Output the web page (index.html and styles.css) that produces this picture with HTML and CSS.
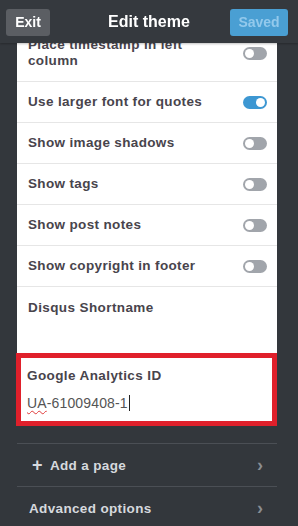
FILE: index.html
```html
<!DOCTYPE html>
<html lang="en">
<head>
  <meta charset="UTF-8" />
  <meta name="viewport" content="width=device-width, initial-scale=1" />
  <title>Edit theme</title>
  <link rel="stylesheet" href="styles.css">
</head>
<body>
  <!-- Ylapalkki pysyy paalla kun sisaltoa vieritetaan -->
  <div class="topbar">
    <button class="btn btn-exit">Exit</button>
    <span class="topbar-title">Edit theme</span>
    <button class="btn btn-saved">Saved</button>
  </div>

  <div class="content">
    <div class="panel">
      <div class="row">
        <span class="row-label">Place timestamp in left column</span>
        <span class="toggle"></span>
      </div>
      <div class="row">
        <span class="row-label">Use larger font for quotes</span>
        <span class="toggle on"></span>
      </div>
      <div class="row">
        <span class="row-label">Show image shadows</span>
        <span class="toggle"></span>
      </div>
      <div class="row">
        <span class="row-label">Show tags</span>
        <span class="toggle"></span>
      </div>
      <div class="row">
        <span class="row-label">Show post notes</span>
        <span class="toggle"></span>
      </div>
      <div class="row">
        <span class="row-label">Show copyright in footer</span>
        <span class="toggle"></span>
      </div>

      <div class="field">
        <div class="field-label">Disqus Shortname</div>
        <div class="field-value"></div>
      </div>

      <!-- punainen korostus -->
      <div class="field field-marked">
        <div class="field-label">Google Analytics ID</div>
        <div class="field-value"><span class="typo">UA</span>-61009408-1<span class="caret"></span></div>
      </div>
    </div>

    <div class="menu">
      <div class="menu-row">
        <span class="menu-label"><span class="plus">+</span>Add a page</span>
        <span class="chevron">&#x203A;</span>
      </div>
      <div class="menu-row">
        <span class="menu-label">Advanced options</span>
        <span class="chevron">&#x203A;</span>
      </div>
    </div>
  </div>
</body>
</html>
```

FILE: styles.css
```css
body {
  margin: 0;
  background-color: #33373c;
  font-family: "Liberation Sans", Arial, sans-serif;
  overflow: hidden;
}

/* Ylapalkki */
.topbar {
  position: fixed;
  top: 0;
  left: 0;
  right: 0;
  height: 43px;
  background-color: #35393e;
  display: grid;
  grid-template-columns: 1fr auto 1fr;
  align-items: center;
  padding: 0 10px 0 6px;
  box-sizing: border-box;
  box-shadow: 0 1px 2px rgba(0,0,0,0.25);
  z-index: 10;
}

.topbar-title {
  color: white;
  font-weight: bold;
  font-size: 16px;
  margin-left: 4px;
}

.btn {
  height: 27px;
  border: none;
  border-radius: 3px;
  font-family: inherit;
  font-weight: bold;
  font-size: 14px;
  padding: 0;
  margin-top: 1px;
}

.btn-exit {
  width: 44px;
  background-color: #5b5e63;
  color: white;
}

.btn-saved {
  width: 58px;
  justify-self: end;
  background-color: #4a9fd3;
  color: #93c9ec;
}

/* Sisalto on vieritetty hieman ylos */
.content {
  padding-top: 25px;
}

.panel {
  background-color: white;
  margin: 0 21px 0 17px;
}

.row {
  display: flex;
  align-items: center;
  justify-content: space-between;
  padding: 12px 10px 12px 11px;
  border-bottom: 1px solid #e6e6e6;
}

.row-label {
  max-width: 195px;
  font-size: 13.5px;
  line-height: 16px;
  font-weight: bold;
  color: #48444c;
  letter-spacing: 0.35px;
}

.toggle {
  position: relative;
  width: 24px;
  height: 13px;
  border-radius: 7px;
  background-color: #a1a5ab;
  flex-shrink: 0;
}

.toggle:before {
  position: absolute;
  content: "";
  width: 9px;
  height: 9px;
  top: 2px;
  left: 2px;
  border-radius: 50%;
  background-color: white;
}

.toggle.on {
  background-color: #3d97d2;
}

.toggle.on:before {
  left: 13px;
}

.field {
  padding: 13px 11px 0 11px;
  height: 53px;
}

.field-label {
  font-size: 13.5px;
  line-height: 16px;
  font-weight: bold;
  color: #48444c;
  letter-spacing: 0.4px;
}

.field-value {
  margin-top: 10px;
  font-size: 14px;
  line-height: 18px;
  color: #555;
  letter-spacing: 0.15px;
}

.field-marked {
  height: auto;
  margin: 0 0 0 -1px;
  padding: 10px 6px 9px 6px;
  border: 5px solid #e0202b;
}

.typo {
  text-decoration: underline wavy #e03a3a;
  text-decoration-thickness: 1px;
  text-underline-offset: 2px;
}

.caret {
  display: inline-block;
  width: 1px;
  height: 16px;
  background-color: #222;
  vertical-align: -3px;
  margin-left: 1px;
}

/* Alavalikko */
.menu {
  margin: 17px 21px 0 17px;
}

.menu-row {
  display: flex;
  align-items: center;
  justify-content: space-between;
  height: 42px;
  border-top: 1px solid #4b4f55;
  padding: 0 14px 0 12px;
}

.menu-label {
  color: #d6d9de;
  font-size: 13.5px;
  font-weight: bold;
  letter-spacing: 0.35px;
}

.plus {
  font-size: 18px;
  margin: 0 7px 0 3px;
  vertical-align: -1px;
}

.chevron {
  color: #8a8d92;
  font-size: 18px;
  font-weight: bold;
}
```
